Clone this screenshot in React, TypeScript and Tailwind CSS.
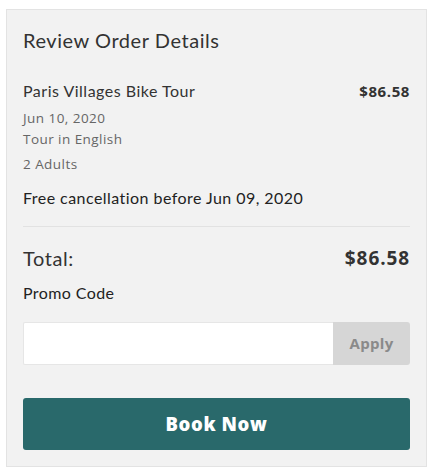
export default function App() {
  return (
    <div className="bg-white w-[435px] h-[474px] pt-[9px] pl-[6px]">
      <div className="w-[421px] h-[458px] bg-[#f2f2f2] border border-[#e3e3e3] px-[16px] pt-[17px] font-['Open_Sans',sans-serif] text-[#333]">
        <h2 className="font-['Lato',sans-serif] text-[20px] leading-[26px] text-[#333] tracking-[0.55px]">Review Order Details</h2>

        <div className="mt-[28px] flex justify-between items-center">
          <span className="font-['Lato',sans-serif] text-[16px] leading-[20px] text-[#333] tracking-[0.5px]">Paris Villages Bike Tour</span>
          <span className="text-[15px] leading-[20px] font-bold text-[#333] tracking-[0.6px]">$86.58</span>
        </div>
        <div className="mt-[7px] text-[13.5px] leading-[20px] text-[#666] tracking-[0.45px]">Jun 10, 2020</div>
        <div className="mt-[1px] text-[13.5px] leading-[20px] text-[#666] tracking-[0.45px]">Tour in English</div>
        <div className="mt-[5px] text-[13.5px] leading-[20px] text-[#666] tracking-[0.45px]">2 Adults</div>
        <div className="mt-[14px] font-['Lato',sans-serif] text-[16px] leading-[20px] text-[#222] tracking-[0.45px]">Free cancellation before Jun 09, 2020</div>

        <div className="mt-[18px] border-t border-[#e2e2e2]" />

        <div className="mt-[18px] flex justify-between items-center">
          <span className="font-['Lato',sans-serif] text-[20px] leading-[26px] text-[#333] tracking-[0.6px]">Total:</span>
          <span className="text-[19px] leading-[26px] font-bold text-[#333] tracking-[0.9px]">$86.58</span>
        </div>
        <div className="mt-[12px] font-['Lato',sans-serif] text-[16px] leading-[20px] text-[#222] tracking-[0.4px]">Promo Code</div>

        <div className="mt-[19px] flex h-[43px]">
          <input className="flex-1 min-w-0 bg-white border border-[#e6e6e6] border-r-0 rounded-l-[2px] outline-none px-3" />
          <button className="w-[77px] bg-[#d6d6d6] rounded-r-[3px] text-[15px] font-bold text-[#8a8a8a] tracking-[0.3px]">Apply</button>
        </div>

        <button className="mt-[33px] w-full h-[52px] bg-[#29696b] rounded-[3px] text-white text-[18.5px] font-extrabold tracking-[0.6px]">Book Now</button>
      </div>
    </div>
  );
}
